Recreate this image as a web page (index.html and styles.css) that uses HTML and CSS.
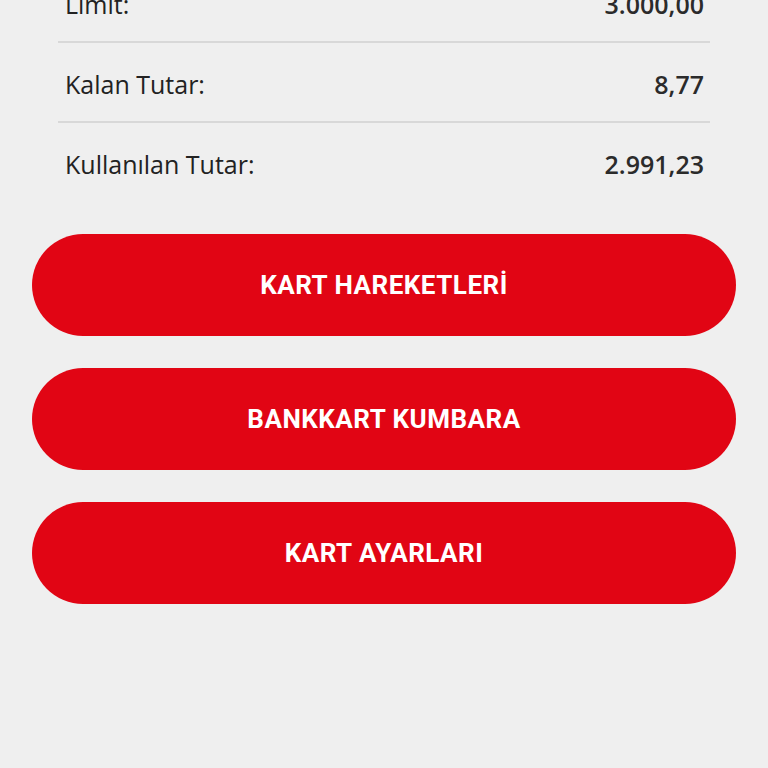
FILE: index.html
```html
<!DOCTYPE html>
<html lang="tr">
<head>
  <meta charset="UTF-8" />
  <title>Kart Detayı</title>
  <link rel="stylesheet" href="styles.css">
</head>
<body>

  <div class="card-info">
    <div class="info-row">
      <span class="label">Limit:</span>
      <span class="value">3.000,00</span>
    </div>
    <div class="info-row">
      <span class="label">Kalan Tutar:</span>
      <span class="value">8,77</span>
    </div>
    <div class="info-row">
      <span class="label">Kullanılan Tutar:</span>
      <span class="value">2.991,23</span>
    </div>
  </div>

  <div class="actions">
    <button class="action-btn">KART HAREKETLERİ</button>
    <button class="action-btn">BANKKART KUMBARA</button>
    <button class="action-btn">KART AYARLARI</button>
  </div>

</body>
</html>
```

FILE: styles.css
```css
* {
  box-sizing: border-box;
}

body {
  margin: 0;
  background: #efefef;
  font-family: 'Open Sans', sans-serif;
  height: 768px;
  overflow: hidden;
}

.card-info {
  margin: -37px 58px 0;
}

.info-row {
  display: flex;
  justify-content: space-between;
  align-items: center;
  height: 80px;
  padding: 3px 6px 0 7px;
  border-bottom: 2px solid #d8d8d8;
  color: #222;
}

.info-row:last-child {
  border-bottom: none;
  height: 81px;
  padding-top: 0;
}

.label {
  font-size: 25px;
  font-weight: 400;
}

.value {
  font-size: 25px;
  font-weight: 600;
  color: #2b2b2b;
}

.actions {
  display: flex;
  flex-direction: column;
  gap: 32px;
  padding: 30px 32px 0;
}

.action-btn {
  height: 102px;
  border: none;
  border-radius: 51px;
  background: #e10514;
  color: #ffffff;
  font-family: Roboto, sans-serif;
  font-weight: 700;
  font-size: 26px;
  letter-spacing: 0.5px;
}
```
